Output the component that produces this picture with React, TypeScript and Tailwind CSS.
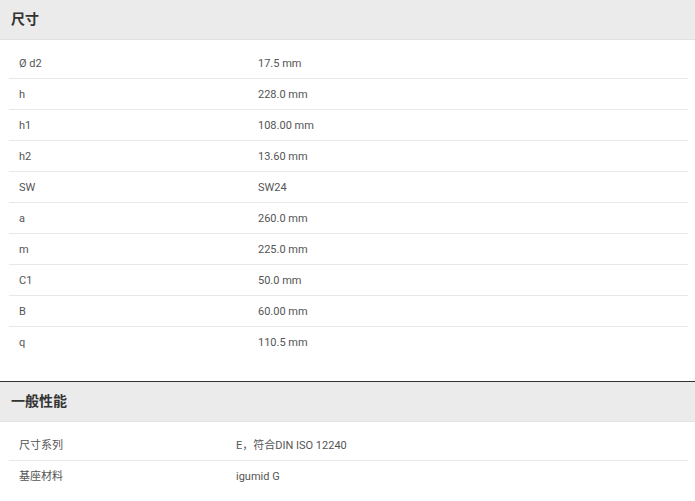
const font = "font-['Roboto','Noto_Sans_CJK_SC',sans-serif]";

type Row = [string, string];

const dimensions: Row[] = [
  ['Ø d2', '17.5 mm'],
  ['h', '228.0 mm'],
  ['h1', '108.00 mm'],
  ['h2', '13.60 mm'],
  ['SW', 'SW24'],
  ['a', '260.0 mm'],
  ['m', '225.0 mm'],
  ['C1', '50.0 mm'],
  ['B', '60.00 mm'],
  ['q', '110.5 mm'],
];

const general: Row[] = [
  ['尺寸系列', 'E，符合DIN ISO 12240'],
  ['基座材料', 'igumid G'],
];

function SpecTable({ title, rows, labelWidth, topBorder }: { title: string; rows: Row[]; labelWidth: string; topBorder?: boolean }) {
  return (
    <section>
      <div
        className={`h-10 flex items-center px-[11px] bg-[#ebebeb] ${
          topBorder ? 'border-t-[1.5px] border-[#333] h-[41px]' : ''
        } border-b border-b-[#e2e2e2]`}
      >
        <h2 className="text-[14px] font-semibold text-[#333]">{title}</h2>
      </div>
      <div className="pt-[8px] ml-[9px] mr-[7px]">
        {rows.map(([label, value], i) => (
          <div
            key={label}
            className={`flex h-[31px] pt-[2px] items-center text-[11px] text-[#555] ${
              i < rows.length - 1 ? 'border-b border-[#e8e8e8]' : ''
            }`}
          >
            <div className={`pl-[10px] ${labelWidth}`}>{label}</div>
            <div>{value}</div>
          </div>
        ))}
      </div>
    </section>
  );
}

export default function App() {
  return (
    <div className={`w-[695px] h-[501px] overflow-hidden bg-white ${font}`}>
      <SpecTable title="尺寸" rows={dimensions} labelWidth="w-[249px]" />
      <div className="h-[23px]" />
      <SpecTable title="一般性能" rows={general} labelWidth="w-[227px]" topBorder />
    </div>
  );
}
